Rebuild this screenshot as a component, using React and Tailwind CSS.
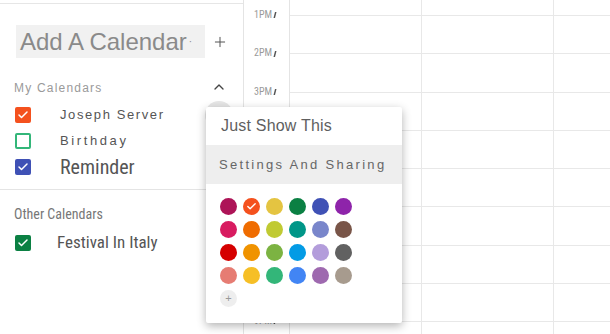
import { ChevronUp, Plus, Check } from 'lucide-react'

const swatches = [
  ['bg-[#ad1457]', 'bg-[#f4511e]', 'bg-[#e4c441]', 'bg-[#0b8043]', 'bg-[#3f51b5]', 'bg-[#8e24aa]'],
  ['bg-[#d81b60]', 'bg-[#ef6c00]', 'bg-[#c0ca33]', 'bg-[#009688]', 'bg-[#7986cb]', 'bg-[#795548]'],
  ['bg-[#d50000]', 'bg-[#f09300]', 'bg-[#7cb342]', 'bg-[#039be5]', 'bg-[#b39ddb]', 'bg-[#616161]'],
  ['bg-[#e67c73]', 'bg-[#f6bf26]', 'bg-[#33b679]', 'bg-[#4285f4]', 'bg-[#9e69af]', 'bg-[#a79b8e]'],
]

// labels 4PM-8PM sit under the popup, so only the visible ones get text
const hours = ['1PM', '2PM', '3PM', '', '', '', '', '', '9PM']

const narrow = "font-['Liberation_Sans_Narrow','Roboto_Condensed','Liberation_Sans',sans-serif]"

function CheckBox({ className, checked }) {
  if (!checked) {
    return <span className={`w-[16px] h-[16px] rounded-[2px] border-2 shrink-0 ${className}`} />
  }
  return (
    <span className={`w-[16px] h-[16px] rounded-[2px] shrink-0 flex items-center justify-center ${className}`}>
      <Check size={12} strokeWidth={3} color="#fff" />
    </span>
  )
}

function Tick() {
  return (
    <svg width="4" height="6" viewBox="0 0 4 6" className="inline-block ml-[1px]">
      <path d="M0.5 6 L2 0 L3.5 0 L2 6 Z" fill="#555" />
    </svg>
  )
}

function Popup() {
  return (
    <div className="absolute left-[206px] top-[107px] w-[196px] h-[216px] bg-white rounded-[2px] shadow-[0_3px_10px_rgba(0,0,0,0.3)] z-10">
      <div className="h-[38px] flex items-center pl-[15px] text-[16px] tracking-[0.2px] text-[#5f5f5f]">Just Show This</div>
      <div className="h-[39px] flex items-center pl-[13px] bg-[#eeeeee] text-[13px] tracking-[2.3px] text-[#666]">
        Settings And Sharing
      </div>
      <div className="pt-[14px] pl-[14px]">
        <div className="grid grid-cols-6 gap-[6px] w-fit">
          {swatches.flat().map((c, i) => (
            <span key={i} className={`w-[17px] h-[17px] rounded-full flex items-center justify-center ${c}`}>
              {i === 1 && <Check size={11} strokeWidth={3} color="#fff" />}
            </span>
          ))}
        </div>
        <div className="mt-[6px] w-[17px] h-[17px] rounded-full bg-[#eeeeee] flex items-center justify-center text-[11px] text-[#999]">
          +
        </div>
      </div>
    </div>
  )
}

export default function App() {
  return (
    <div className="relative flex h-[334px] w-[610px] overflow-hidden bg-white font-['Liberation_Sans',Arial,sans-serif]">
      <aside className="w-[244px] shrink-0 border-r border-[#e4e4e4]">
        <div className="h-[4px] border-b border-[#e6e6e6]" />

        <div className="mt-[21px] flex items-center h-[33px] pl-[16px]">
          <div className="w-[189px] h-[33px] bg-[#f1f1f1] flex items-center pl-[4px] text-[24px] text-[#8a8a8a] whitespace-nowrap overflow-hidden">
            Add A Calendar<span className="text-[10px] ml-[2px]">·</span>
          </div>
          <Plus size={16} strokeWidth={1.5} color="#555" className="ml-[7px]" />
        </div>

        <div className="mt-[20px] h-[20px] flex items-center pl-[14px] pr-[16px] justify-between">
          <span className="text-[12px] tracking-[1.2px] text-[#9a9a9a]">My Calendars</span>
          <ChevronUp size={16} strokeWidth={2} color="#444" className="-mt-[3px]" />
        </div>

        <div className="mt-[4px]">
          <div className="relative h-[26px] flex items-center pl-[15px]">
            <CheckBox className="bg-[#f4511e]" checked />
            <span className="ml-[29px] text-[13px] tracking-[1.6px] text-[#555]">Joseph Server</span>
            <span className="absolute left-[205px] top-1/2 -translate-y-1/2 w-[28px] h-[28px] rounded-full bg-[#e6e6e6]" />
          </div>
          <div className="h-[26px] flex items-center pl-[15px]">
            <CheckBox className="border-[#33b679]" />
            <span className="ml-[29px] text-[13px] tracking-[2.6px] text-[#555]">Birthday</span>
          </div>
          <div className="h-[26px] flex items-center pl-[15px]">
            <CheckBox className="bg-[#3f51b5]" checked />
            <span className={`ml-[29px] text-[20px] text-[#555] ${narrow}`}>Reminder</span>
          </div>
        </div>

        <div className="mt-[9px] border-t border-[#e4e4e4]" />

        <div className={`mt-[14px] h-[20px] flex items-center pl-[14px] text-[14px] text-[#777] ${narrow}`}>
          Other Calendars
        </div>
        <div className="mt-[6px] h-[26px] flex items-center pl-[15px]">
          <CheckBox className="bg-[#0b8043]" checked />
          <span className={`ml-[26px] text-[17px] text-[#555] ${narrow}`}>Festival In Italy</span>
        </div>
      </aside>

      <div className="w-[46px] shrink-0 border-r border-[#e4e4e4]">
        <div className="h-[10px]" />
        {hours.map((h, i) => (
          <div key={i} className={`h-[38.25px] text-right pr-[12px] leading-[10px] text-[10px] text-[#9a9a9a] ${narrow}`}>
            {h && (
              <>
                {h}
                <Tick />
              </>
            )}
          </div>
        ))}
      </div>

      {[0, 1, 2].map((c) => (
        <div key={c} className={c < 2 ? 'w-[132px] shrink-0 border-r border-[#e8e8e8]' : 'flex-1'}>
          <div className="h-[15px]" />
          {hours.map((h, i) => (
            <div key={i} className="h-[38.25px] border-t border-[#e8e8e8]" />
          ))}
        </div>
      ))}

      <Popup />
    </div>
  )
}
